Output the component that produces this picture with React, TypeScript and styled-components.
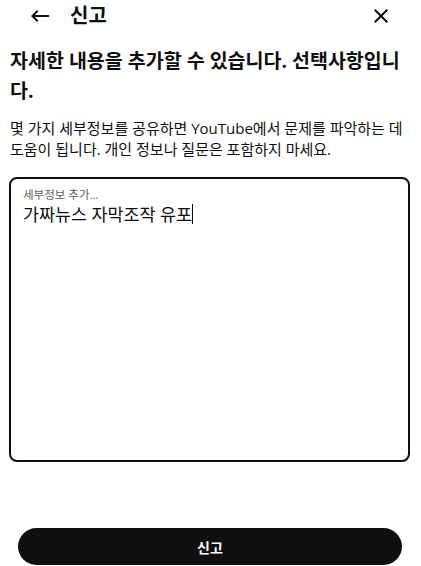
import React from "react";
import styled, { createGlobalStyle } from "styled-components";

const GlobalStyle = createGlobalStyle`
  html, body {
    margin: 0;
    padding: 0;
    background: #ffffff;
  }
  body {
    font-family: "Open Sans", "Noto Sans CJK KR", "Noto Sans", sans-serif;
    color: #0f0f0f;
  }
`;

const Page = styled.div`
  width: 421px;
  height: 566px;
  box-sizing: border-box;
  padding: 0 11px 0 9px;
  display: flex;
  flex-direction: column;
  overflow: hidden;
`;

const Header = styled.header`
  height: 32px;
  display: flex;
  align-items: center;
  padding: 0 17px 0 19px;
`;

const IconButton = styled.button`
  width: 24px;
  height: 24px;
  padding: 0;
  border: 0;
  background: none;
  display: flex;
  align-items: center;
  justify-content: center;
  color: #0f0f0f;
  cursor: pointer;
  svg {
    width: 24px;
    height: 24px;
    fill: currentColor;
  }
`;

const Title = styled.h1`
  margin: 0 0 0 18px;
  flex: 1;
  font-size: 20px;
  font-weight: 700;
  line-height: 28px;
`;

const Heading = styled.h2`
  margin: 14px 0 0;
  padding-left: 1px;
  font-size: 19.5px;
  font-weight: 700;
  line-height: 30px;
`;

const Description = styled.p`
  margin: 12px 0 0;
  padding-left: 1px;
  font-size: 15px;
  line-height: 21px;
  font-weight: 400;
`;

const DetailsBox = styled.div`
  margin-top: 17px;
  height: 285px;
  box-sizing: border-box;
  border: 2px solid #0f0f0f;
  border-radius: 8px;
  padding: 8px 12px;
`;

const FieldLabel = styled.div`
  font-size: 11.5px;
  line-height: 16px;
  color: #606060;
`;

const FieldValue = styled.div`
  font-size: 17.4px;
  line-height: 22px;
  color: #0f0f0f;
  display: flex;
  align-items: center;
`;

const Caret = styled.span`
  display: inline-block;
  width: 1px;
  height: 20px;
  background: #0f0f0f;
`;

const SubmitButton = styled.button`
  margin: 66px 8px 0 9px;
  height: 37px;
  flex-shrink: 0;
  border: 0;
  border-radius: 19px;
  background: #0f0f0f;
  color: #ffffff;
  font-family: "Open Sans", "Noto Sans CJK KR", sans-serif;
  font-size: 14px;
  font-weight: 700;
  cursor: pointer;
`;

const BackIcon = () => (
  <svg viewBox="0 0 24 24" aria-hidden="true">
    <path d="M21 11H6.83l3.58-3.59L9 6l-6 6 6 6 1.41-1.41L6.83 13H21z" />
  </svg>
);

const CloseIcon = () => (
  <svg viewBox="0 0 24 24" aria-hidden="true">
    <path d="M19 6.41 17.59 5 12 10.59 6.41 5 5 6.41 10.59 12 5 17.59 6.41 19 12 13.41 17.59 19 19 17.59 13.41 12z" />
  </svg>
);

export default function App() {
  return (
    <>
      <GlobalStyle />
      <Page>
        <Header>
          <IconButton aria-label="뒤로">
            <BackIcon />
          </IconButton>
          <Title>신고</Title>
          <IconButton aria-label="닫기">
            <CloseIcon />
          </IconButton>
        </Header>
        <Heading>자세한 내용을 추가할 수 있습니다. 선택사항입니다.</Heading>
        <Description>
          몇 가지 세부정보를 공유하면 YouTube에서 문제를 파악하는 데 도움이 됩니다. 개인 정보나 질문은 포함하지 마세요.
        </Description>
        <DetailsBox>
          <FieldLabel>세부정보 추가...</FieldLabel>
          <FieldValue>
            가짜뉴스 자막조작 유포
            <Caret />
          </FieldValue>
        </DetailsBox>
        <SubmitButton>신고</SubmitButton>
      </Page>
    </>
  );
}
